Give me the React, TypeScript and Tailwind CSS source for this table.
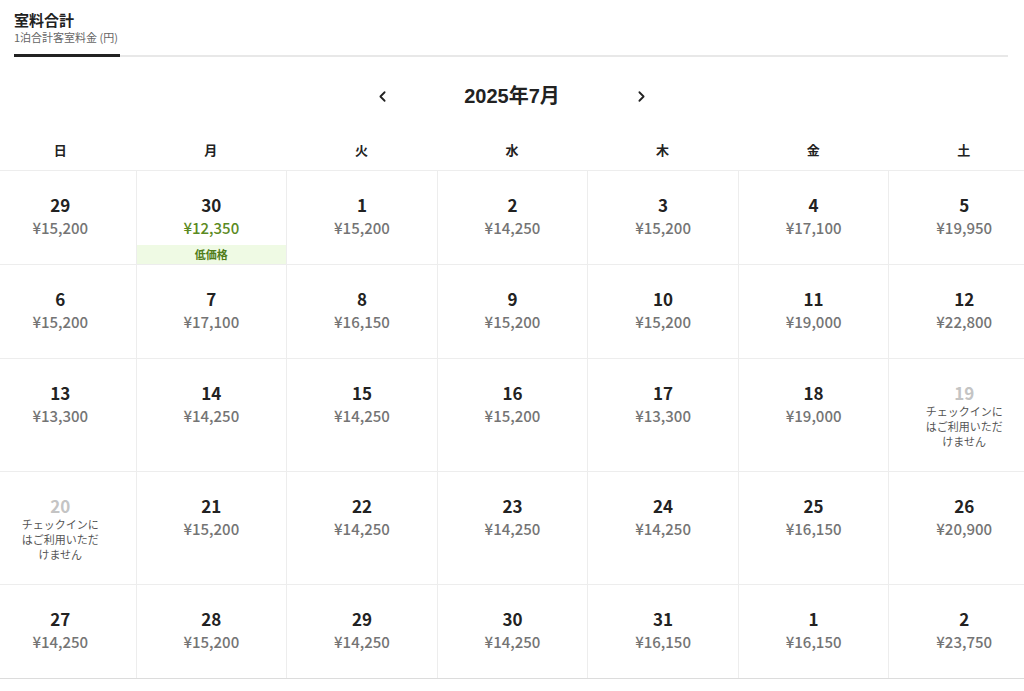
import { ChevronLeft, ChevronRight } from "lucide-react";

interface Day {
  day: number;
  price?: string;
  low?: boolean;
  unavailable?: boolean;
}

const weekdays = ["日", "月", "火", "水", "木", "金", "土"];

const weeks: Day[][] = [
  [
    { day: 29, price: "¥15,200" },
    { day: 30, price: "¥12,350", low: true },
    { day: 1, price: "¥15,200" },
    { day: 2, price: "¥14,250" },
    { day: 3, price: "¥15,200" },
    { day: 4, price: "¥17,100" },
    { day: 5, price: "¥19,950" },
  ],
  [
    { day: 6, price: "¥15,200" },
    { day: 7, price: "¥17,100" },
    { day: 8, price: "¥16,150" },
    { day: 9, price: "¥15,200" },
    { day: 10, price: "¥15,200" },
    { day: 11, price: "¥19,000" },
    { day: 12, price: "¥22,800" },
  ],
  [
    { day: 13, price: "¥13,300" },
    { day: 14, price: "¥14,250" },
    { day: 15, price: "¥14,250" },
    { day: 16, price: "¥15,200" },
    { day: 17, price: "¥13,300" },
    { day: 18, price: "¥19,000" },
    { day: 19, unavailable: true },
  ],
  [
    { day: 20, unavailable: true },
    { day: 21, price: "¥15,200" },
    { day: 22, price: "¥14,250" },
    { day: 23, price: "¥14,250" },
    { day: 24, price: "¥14,250" },
    { day: 25, price: "¥16,150" },
    { day: 26, price: "¥20,900" },
  ],
  [
    { day: 27, price: "¥14,250" },
    { day: 28, price: "¥15,200" },
    { day: 29, price: "¥14,250" },
    { day: 30, price: "¥14,250" },
    { day: 31, price: "¥16,150" },
    { day: 1, price: "¥16,150" },
    { day: 2, price: "¥23,750" },
  ],
];

function DayCell({ d, first }: { d: Day; first: boolean }) {
  return (
    <div
      className={`relative flex flex-col items-center pt-[23px] ${
        d.unavailable ? "pb-[22px]" : "pb-[24px]"
      } ${first ? "" : "border-l border-[#ededed]"}`}
    >
      <span
        className={`text-[17px] font-bold leading-[22px] ${
          d.unavailable ? "text-[#c4c4c4]" : "text-[#222]"
        }`}
      >
        {d.day}
      </span>
      {d.unavailable ? (
        <span className="w-[84px] text-center text-[11px] leading-[15px] text-[#555]">
          チェックインにはご利用いただけません
        </span>
      ) : (
        <span
          className={`text-[15px] font-medium leading-[24px] ${
            d.low ? "text-[#5b8a22]" : "text-[#747474]"
          }`}
        >
          {d.price}
        </span>
      )}
      {d.low && (
        <div className="absolute bottom-0 left-0 right-0 flex h-[19px] items-center justify-center bg-[#effae4] text-[11px] font-bold text-[#4f7d1a]">
          低価格
        </div>
      )}
    </div>
  );
}

export default function App() {
  return (
    <div
      className="h-[691px] w-[1024px] overflow-hidden bg-white text-[#222]"
      style={{ fontFamily: '"Noto Sans CJK JP", "Noto Sans", sans-serif' }}
    >
      <div className="px-[14px] pt-[10px]">
        <div className="w-[994px] border-b-2 border-[#e8e8e8]">
          <div className="-mb-[2px] w-[106px] border-b-[3px] border-[#222] pb-[10px]">
            <div className="text-[15px] font-bold leading-[20px]">室料合計</div>
            <div className="whitespace-nowrap text-[11px] leading-[14px] text-[#666]">
              1泊合計客室料金 (円)
            </div>
          </div>
        </div>
      </div>

      <div className="mt-[25px] flex h-[28px] items-center justify-center">
        <button className="flex w-[24px] justify-center text-[#222]">
          <ChevronLeft size={17} strokeWidth={2.5} />
        </button>
        <div
          className="w-[235px] text-center text-[20px] font-bold text-[#222]"
          style={{ fontFamily: '"Liberation Sans", "Noto Sans CJK JP", sans-serif' }}
        >
          2025年7月
        </div>
        <button className="flex w-[24px] justify-center text-[#222]">
          <ChevronRight size={17} strokeWidth={2.5} />
        </button>
      </div>

      <div className="ml-[-15px] mt-[20px] w-[1054px] border-b border-[#dcdcdc]">
        <div className="grid h-[41px] grid-cols-7 items-center border-b border-[#ededed]">
          {weekdays.map((w) => (
            <div key={w} className="text-center text-[13px] font-bold">
              {w}
            </div>
          ))}
        </div>
        {weeks.map((week, i) => (
          <div
            key={i}
            className={`grid grid-cols-7 ${i < weeks.length - 1 ? "border-b border-[#ededed]" : ""}`}
          >
            {week.map((d, j) => (
              <DayCell key={j} d={d} first={j === 0} />
            ))}
          </div>
        ))}
      </div>
    </div>
  );
}
